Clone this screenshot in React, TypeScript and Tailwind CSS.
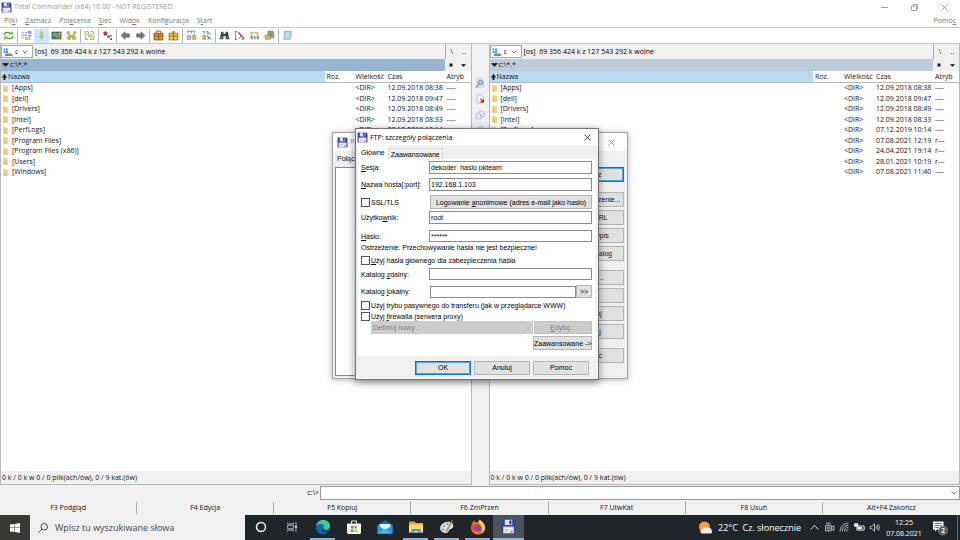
import React from "react";

type Entry = { name: string; date: string; attr: string };

const entries: Entry[] = [
  { name: "[Apps]", date: "12.09.2018 08:38", attr: "----" },
  { name: "[dell]", date: "12.09.2018 09:47", attr: "----" },
  { name: "[Drivers]", date: "12.09.2018 08:49", attr: "----" },
  { name: "[Intel]", date: "12.09.2018 08:33", attr: "----" },
  { name: "[PerfLogs]", date: "07.12.2019 10:14", attr: "----" },
  { name: "[Program Files]", date: "07.08.2021 12:19", attr: "r---" },
  { name: "[Program Files (x86)]", date: "24.04.2021 19:14", attr: "r---" },
  { name: "[Users]", date: "28.01.2021 10:19", attr: "r---" },
  { name: "[Windows]", date: "07.08.2021 11:40", attr: "----" },
];

function Floppy({ className = "size-[11px]" }: { className?: string }) {
  return (
    <svg viewBox="0 0 20 20" className={`shrink-0 ${className}`} aria-hidden="true">
      <path d="M1 1h16l2 2v16H1z" fill="#2b3fb4" />
      <path d="M5 1h10v7H5z" fill="#dfe6f8" />
      <path d="M11 2h3v5h-3z" fill="#2b3fb4" />
      <path d="M3 10h14v9H3z" fill="#f4f4f6" />
      <path d="M3 10h14v1H3z" fill="#c9504b" />
      <path d="M5 14h6M5 16.500h4" stroke="#9aa0b0" />
      <path d="M12 15h4v3h-4z" fill="#b9a0a8" />
    </svg>
  );
}

function Chevron({ className = "" }: { className?: string }) {
  return (
    <svg viewBox="0 0 6 4" className={`h-1 w-1.5 shrink-0 ${className}`} fill="none" stroke="currentColor" strokeWidth="0.8" aria-hidden="true">
      <path d="M.5.5 3 3 5.500.5" />
    </svg>
  );
}

function ToolIcon({ kind }: { kind: string }) {
  const drawings: Record<string, React.ReactNode> = {
    refresh: (
      <g fill="none" stroke="#3aa52e" strokeWidth="2.400">
        <path d="M2 9c1-5 7-6 11-3M18 11c-1 5-7 6-11 3" />
        <path d="M10 8h8V2zM10 12H2v6z" fill="#5cc13f" stroke="none" />
      </g>
    ),
    brief: (
      <g>
        <path d="M1 3h4v3H1zM1 8h4v3H1zM7 3h4v3H7zM7 8h4v3H7z" fill="#9aa6c8" />
        <path d="M13 2h6v5h-6zM13 9h6v3h-6z" fill="#8291d0" />
        <path d="M8 13h4v5H8zM14 13h3v5h-3zM1 13h4v2H1z" fill="#b7a73c" />
      </g>
    ),
    full: (
      <g>
        <path d="M8 2h4v4H8z" fill="#d8c04b" />
        <path d="M8 8h4v4H8zM8 14h4v3H8z" fill="#c5a93d" />
        <path d="M6 6h8v1H6zM6 12h8v1H6z" fill="#7e8ea8" />
      </g>
    ),
    thumbs: (
      <g>
        <path d="M1 3h18v14H1z" fill="#51605a" />
        <path d="M3 5h8v7H3z" fill="#49b0a1" />
        <path d="M9 8h8v7H9z" fill="#8a9b39" />
        <path d="M13 5h4v3h-4z" fill="#d8c04b" />
        <path d="M4 13h4v3H4z" fill="#3e7dae" />
      </g>
    ),
    tree: (
      <g fill="#e0bd3f" stroke="#927a30">
        <path d="M2 3h4v4H2zM14 3h4v4h-4zM3 12h5v5H3zM12 12h5v5h-5z" />
        <path d="M5 8l5 4 5-4" fill="none" strokeWidth="2" />
      </g>
    ),
    swap: (
      <g fill="none" stroke="#9da447" strokeWidth="1.600">
        <path d="M2 3h6v6H2zM12 11h6v6h-6z" />
        <path d="M12 3h5v5M8 17H3v-5M7 13l6-6" stroke="#77838f" />
      </g>
    ),
    star: (
      <g>
        <path d="M6 1l1.500 3L11 4 8.500 7l1.500 4-4-2-3 2 .5-4L1 4h3.500z" fill="#b32158" />
        <path d="M10 10h4v4h-4zM15 15h3v3h-3z" fill="#6f2a70" />
        <path d="M13 9h5v4z" fill="#d64d6b" />
      </g>
    ),
    back: <path d="M2 10l7-7v4h8v6H9v4z" fill="#777" stroke="#555" />,
    forward: <path d="M18 10l-7-7v4H3v6h8v4z" fill="#777" stroke="#555" />,
    pack: (
      <g>
        <path d="M2 6h16v12H2z" fill="#e39a2c" stroke="#7c4b17" strokeWidth="1.600" />
        <path d="M6 6V2h8v4M2 11h16M10 6v12" fill="none" stroke="#a9552c" strokeWidth="1.800" />
      </g>
    ),
    unpack: (
      <g>
        <path d="M2 6h16v12H2z" fill="#e5cf3c" stroke="#887328" strokeWidth="1.600" />
        <path d="M10 2v16M7 5l3-3 3 3M2 11h16" fill="none" stroke="#77802a" strokeWidth="1.800" />
      </g>
    ),
    ftp: (
      <g>
        <path d="M2 2h16M4 2v5M10 2v5M15 2v5" stroke="#8b8d9a" strokeWidth="2" strokeDasharray="3 1" />
        <path d="M2 10h7v7H2z" fill="#bdc4cf" stroke="#7d8188" />
        <path d="M12 9h6v8h-6z" fill="#d6c254" stroke="#948438" />
      </g>
    ),
    url: (
      <g>
        <path d="M2 3h4v4M9 3h3v4M14 3v4h4" fill="none" stroke="#6283a5" strokeWidth="1.600" />
        <path d="M3 10h6v7H3z" fill="#d6c254" stroke="#948438" />
        <path d="M11 10l7 7M12 17l3-3" stroke="#687f9c" strokeWidth="2" />
      </g>
    ),
    find: (
      <g fill="#3b3f46">
        <path d="M4 3h4v4h4V3h4l3 14h-7v-6H8v6H1z" />
        <path d="M3 12h3v3H3zM14 12h3v3h-3z" fill="#8a93a0" />
      </g>
    ),
    rename: (
      <g>
        <path d="M3 2v16M2 3h4M2 17h4" stroke="#6775ae" strokeWidth="1.600" />
        <path d="M8 4l10 12" stroke="#c04a41" strokeWidth="3" />
        <path d="M9 16l4-5M14 17h4" stroke="#555" strokeWidth="1.400" />
      </g>
    ),
    sync: (
      <g>
        <path d="M2 3h5v5H2zM12 3h5v5h-5z" fill="#d6c86a" />
        <path d="M3 11h4v6H3zM9 11h3v6H9zM14 11h4v6h-4z" fill="#8d9499" />
        <path d="M7 5h5M5 8v4M15 8v4" stroke="#667" />
      </g>
    ),
    copy: (
      <g>
        <path d="M7 2h9l2 3v9H7z" fill="#9aa36a" stroke="#777" />
        <path d="M2 9h10v8H2z" fill="#d5c056" stroke="#8a8140" />
        <path d="M9 5h6v7H9z" fill="#7f90a4" />
      </g>
    ),
    notepad: (
      <g>
        <path d="M5 2h12l-2 15H3z" fill="#a9d0e4" stroke="#78a3b8" />
        <path d="M7 6h7M6.500 9h7M6 12h7" stroke="#e8f5fa" />
        <path d="M15 17l2-14 1 1-1 14z" fill="#d8cc96" />
      </g>
    ),
  };
  return (
    <svg viewBox="0 0 20 20" className="size-[11px]" aria-hidden="true">
      {drawings[kind]}
    </svg>
  );
}

const toolGroups: string[][] = [
  ["refresh"],
  ["brief", "full", "thumbs", "tree"],
  ["swap"],
  ["star"],
  ["back", "forward"],
  ["pack", "unpack"],
  ["ftp", "url"],
  ["find", "rename", "sync", "copy"],
  ["notepad"],
];

function Toolbar() {
  return (
    <div className="flex h-[17px] shrink-0 items-center border-y border-[#c4c4c4] bg-white">
      {toolGroups.map((group, i) => (
        <div key={i} className={`flex items-center px-px ${i ? "border-l border-[#b4b4b4]" : ""}`}>
          {group.map((kind) => (
            <button
              key={kind}
              type="button"
              aria-label={kind}
              className={`flex h-[14px] w-[15px] items-center justify-center ${kind === "full" ? "bg-[#cde6fa]" : ""}`}
            >
              <ToolIcon kind={kind} />
            </button>
          ))}
        </div>
      ))}
    </div>
  );
}

function MenuItem({ before = "", hot, after = "" }: { before?: string; hot: string; after?: string }) {
  return (
    <button type="button" className="whitespace-nowrap">
      {before}
      <span className="underline">{hot}</span>
      {after}
    </button>
  );
}

function FilePane({ active = false }: { active?: boolean }) {
  return (
    <section className="flex min-w-0 flex-1 flex-col border-x border-[#b8b8b8]">
      <div className="flex h-[15px] shrink-0 items-center">
        <div className="relative flex h-[13px] w-8 shrink-0 items-center border border-[#a8a8a8] bg-white">
          <svg viewBox="0 0 20 16" className="ml-px h-2 w-[10px] shrink-0" aria-hidden="true">
            <path d="M1 1h4v4H1zM6 1h4v4H6zM1 6h4v4H1zM6 6h4v4H6z" fill="#28a8dc" />
            <path d="M4 11h12l3 2v3H4z" fill="#7d8790" />
          </svg>
          <select aria-label="Dysk" className="w-full appearance-none bg-transparent pl-0.5 outline-none">
            <option>c</option>
          </select>
          <Chevron className="absolute right-1 text-[#555]" />
        </div>
        <span className="ml-0.5 flex-1 whitespace-pre text-black">[os]  69 356 424 k z 127 543 292 k wolne</span>
        <div className="flex h-full w-[26px] items-center justify-around border-l border-[#aaa]">
          <button type="button">\</button>
          <button type="button">..</button>
        </div>
      </div>
      <div className="flex h-3 shrink-0">
        <div className={`flex flex-1 items-center gap-px ${active ? "bg-[#99b4d1]" : "bg-[#bfcddb]"}`}>
          <svg viewBox="0 0 8 4" className="ml-px h-1 w-[7px]" aria-hidden="true">
            <path d="M0 0h8L4 4z" />
          </svg>
          <span>c:\*.*</span>
        </div>
        <div className="flex w-[26px] items-center justify-around">
          <button type="button" aria-label="Ulubione">
            <svg viewBox="0 0 6 6" className="size-1" aria-hidden="true">
              <path d="M3 0v6M0 3h6M1 1l4 4M5 1L1 5" stroke="black" strokeWidth="1.200" />
            </svg>
          </button>
          <button type="button" aria-label="Historia">
            <svg viewBox="0 0 6 3" className="h-[3px] w-[5px]" aria-hidden="true">
              <path d="M0 0h6L3 3z" />
            </svg>
          </button>
        </div>
      </div>
      <div className="min-h-0 flex-1 overflow-hidden bg-white">
        <table className="w-full table-fixed border-separate border-spacing-0 text-left leading-[10px] whitespace-nowrap">
          <colgroup>
            <col />
            <col className="w-[31px]" />
            <col className="w-8" />
            <col className="w-[59px]" />
            <col className="w-6" />
          </colgroup>
          <thead>
            <tr className="h-3 [&>th]:border-b [&>th]:border-[#b5b5b5] [&>th]:p-0 [&>th]:font-normal">
              <th className="bg-[#badaf2]">
                <span className="flex items-center gap-px">
                  <svg viewBox="0 0 6 7" className="ml-px h-[6px] w-[5px]" aria-hidden="true">
                    <path d="M3 0l3 4H4v3H2V4H0z" />
                  </svg>
                  Nazwa
                </span>
              </th>
              <th><span className="pl-0.5">Roz.</span></th>
              <th>Wielkość</th>
              <th>Czas</th>
              <th>Atryb</th>
            </tr>
          </thead>
          <tbody>
            {entries.map((e) => (
              <tr key={e.name} className="odd:h-[10px] even:h-[11px] [&>td]:p-0">
                <td>
                  <span className="flex items-center gap-1 pl-0.5">
                    <svg viewBox="0 0 10 14" className="h-[7px] w-[5px]" aria-hidden="true">
                      <path d="M0 0h6l1 2h3v12H0z" fill="#f0d58a" />
                      <path d="M4 2l2 5v6H2z" fill="#e6b944" opacity=".6" />
                    </svg>
                    {e.name}
                  </span>
                </td>
                <td />
                <td>&lt;DIR&gt;</td>
                <td>{e.date}</td>
                <td>{e.attr}</td>
              </tr>
            ))}
          </tbody>
        </table>
      </div>
      <div className="flex h-[14px] shrink-0 items-center border-b border-[#b8b8b8] pl-px">
        0 k / 0 k w 0 / 0 plik(ach/ów), 0 / 9 kat.(ów)
      </div>
    </section>
  );
}

function SideBar() {
  return (
    <div className="flex w-[17px] shrink-0 flex-col items-center gap-1.5 pt-[34px]">
      {["Podgląd", "Edycja", "Kopiuj", "Przenieś"].map((label, i) => (
        <button key={label} type="button" aria-label={label}>
          <svg viewBox="0 0 20 20" className="size-[10px]" fill="none" aria-hidden="true">
            {i < 2 && <path d="M4 2h9l4 4v12H4z" fill="#edf1fb" stroke="#98a6cf" />}
            {i === 0 && (
              <g>
                <circle cx="11" cy="9" r="4.500" fill="#b8cae8" stroke="#597197" strokeWidth="1.500" />
                <path d="M8 12l-6 7" stroke="#8593b4" strokeWidth="2.500" />
              </g>
            )}
            {i === 1 && <path d="M11 9l5 6M12 16h5v-4z" stroke="#b92820" strokeWidth="2.200" fill="#bd332a" />}
            {i > 1 && <path d="M2 7h7l3 3v8H2zM9 2h6l3 3v9h-6v-4L9 7z" fill="#e5ecfb" stroke="#7b93d0" />}
          </svg>
        </button>
      ))}
    </div>
  );
}

const winButton = "border border-[#b4b4b4] bg-[#e1e1e1] text-center whitespace-nowrap";
const field = "border border-[#8a8a8a] bg-white px-px outline-none";

function ConnectDialog() {
  const buttons: { label: string; gap: string }[] = [
    { label: "Połącz", gap: "" },
    { label: "Nowe połączenie...", gap: "mt-[10px]" },
    { label: "Nowy URL", gap: "mt-[3px]" },
    { label: "Kopiuj wpis", gap: "mt-[3px]" },
    { label: "Nowy katalog", gap: "mt-[3px]" },
    { label: "Zmień...", gap: "mt-[9px]" },
    { label: "Usuń", gap: "mt-[3px]" },
    { label: "Szyfruj", gap: "mt-[3px]" },
    { label: "Anuluj", gap: "mt-[3px]" },
    { label: "Pomoc", gap: "mt-[9px]" },
  ];
  return (
    <div className="absolute top-[132px] left-[332px] flex h-[247px] w-[296px] flex-col border border-[#a5a5a5] bg-[#f0f0f0] font-['Liberation_Sans',sans-serif] text-[7px] shadow-[0_1px_6px_rgba(0,0,0,0.3)]">
      <div className="flex h-[18px] shrink-0 items-center bg-white px-1 text-[#888]">
        <Floppy />
        <span className="ml-0.5 flex-1 font-['Open_Sans',sans-serif]">Połącz</span>
        <button type="button" aria-label="Zamknij okno" className="mr-2">
          <svg viewBox="0 0 7 7" className="size-[7px]" stroke="#888" strokeWidth=".8" aria-hidden="true">
            <path d="M.5.5l6 6M6.500.5l-6 6" />
          </svg>
        </button>
      </div>
      <div className="flex h-4 shrink-0 items-center pl-1">Połącz z:</div>
      <div className="flex min-h-0 flex-1 gap-2 pr-[3px] pb-0.5 pl-0.5">
        <div className="flex-1 border border-[#8a8a8a] bg-white" />
        <div className="flex w-[66px] flex-col">
          {buttons.map(({ label, gap }, i) => (
            <button
              key={label}
              type="button"
              className={`h-[15px] shrink-0 border whitespace-nowrap ${gap} ${i === 0 ? "border-[#0078d7] ring-1 ring-[#0078d7]/60 ring-inset" : "border-[#b4b4b4]"} bg-[#e1e1e1]`}
            >
              {label}
            </button>
          ))}
        </div>
      </div>
    </div>
  );
}

function CheckRow({ id, className = "", children }: { id: string; className?: string; children: React.ReactNode }) {
  return (
    <div className={`flex h-[9px] items-center ${className}`}>
      <input id={id} type="checkbox" className="size-[9px] shrink-0 appearance-none border border-[#555] bg-white" />
      <label htmlFor={id} className="ml-px whitespace-nowrap">{children}</label>
    </div>
  );
}

function FtpDialog() {
  return (
    <div className="absolute top-[128px] left-[355px] flex h-[252px] w-[244px] flex-col border border-[#777] bg-[#f0f0f0] font-['Liberation_Sans',sans-serif] text-[7px] leading-[9px] text-black shadow-[0_2px_8px_rgba(0,0,0,0.45)]">
      <div className="flex h-4 shrink-0 items-center bg-white pl-px">
        <Floppy />
        <span className="ml-0.5 flex-1 font-['Open_Sans',sans-serif]">FTP: szczegóły połączenia</span>
        <button type="button" aria-label="Zamknij" className="mr-[7px]">
          <svg viewBox="0 0 7 7" className="size-[7px]" stroke="#222" strokeWidth=".8" aria-hidden="true">
            <path d="M.5.5l6 6M6.500.5l-6 6" />
          </svg>
        </button>
      </div>
      <div className="flex h-[14px] shrink-0 items-end pl-0.5" role="tablist">
        <button type="button" role="tab" aria-selected="true" className="h-[13px] bg-white px-[3px]">Główne</button>
        <button type="button" role="tab" aria-selected="false" className="h-[11px] border border-b-0 border-[#d9d9d9] px-0.5">Zaawansowane</button>
      </div>
      <form className="mx-0.5 flex flex-1 flex-col bg-white pt-0.5 pr-1 pl-[3px]" onSubmit={(e) => e.preventDefault()}>
        <div className="flex h-[13px] items-center">
          <label htmlFor="session" className="w-[68px] shrink-0"><u>S</u>esja:</label>
          <input id="session" defaultValue="dekoder  haslo pkteam" className="h-full min-w-0 flex-1 border border-[#5b9cc4] bg-white px-px outline-none" />
        </div>
        <div className="mt-1 flex h-[13px] items-center">
          <label htmlFor="host" className="w-[68px] shrink-0"><u>N</u>azwa hosta[:port]:</label>
          <input id="host" defaultValue="192.168.1.103" className={`h-full min-w-0 flex-1 ${field}`} />
        </div>
        <div className="mt-1 flex h-[14px] items-center">
          <CheckRow id="ssl" className="w-[68px]">SSL/TLS</CheckRow>
          <button type="button" className={`ml-px h-full flex-1 ${winButton}`}>
            Logowanie <u>a</u>nonimowe (adres e-mail jako hasło)
          </button>
        </div>
        <div className="mt-0.5 flex h-[13px] items-center">
          <label htmlFor="user" className="w-[68px] shrink-0">Użytko<u>w</u>nik:</label>
          <input id="user" defaultValue="root" className={`h-full min-w-0 flex-1 ${field}`} />
        </div>
        <div className="mt-1.5 flex h-3 items-center">
          <label htmlFor="pass" className="w-[68px] shrink-0"><u>H</u>asło:</label>
          <input id="pass" defaultValue="******" className={`h-full min-w-0 flex-1 ${field}`} />
        </div>
        <p className="mt-px whitespace-nowrap">Ostrzeżenie: Przechowywanie hasła nie jest bezpieczne!</p>
        <CheckRow id="master" className="mt-1"><u>U</u>żyj hasła głównego dla zabezpieczenia hasła</CheckRow>
        <div className="mt-[3px] flex h-3 items-center">
          <label htmlFor="remote" className="w-[68px] shrink-0">Katalog <u>z</u>dalny:</label>
          <input id="remote" className={`h-full min-w-0 flex-1 ${field}`} />
        </div>
        <div className="mt-[5px] flex h-[13px] items-center">
          <label htmlFor="local" className="w-[69px] shrink-0">Katalog <u>l</u>okalny:</label>
          <input id="local" className={`h-3 min-w-0 flex-1 ${field}`} />
          <button type="button" className={`h-full w-4 ${winButton}`}>&gt;&gt;</button>
        </div>
        <CheckRow id="passive" className="mt-[3px]">Użyj trybu pasywnego do transferu (jak w przeglądarce WWW)</CheckRow>
        <CheckRow id="firewall" className="mt-0.5">Użyj <u>f</u>irewalla (serwera proxy)</CheckRow>
        <div className="ml-[10px] flex h-[13px] gap-px">
          <div className="relative flex flex-1 items-center bg-[#cccccc] text-[#838383]">
            <select aria-label="Serwer proxy" disabled className="h-full w-full appearance-none bg-transparent pl-0.5 opacity-100">
              <option>Definiuj nowy...</option>
            </select>
            <Chevron className="absolute right-0.5 text-[#aaa]" />
          </div>
          <button type="button" disabled className="w-[58px] border border-[#bfbfbf] bg-[#cccccc] text-[#838383]">
            <u>E</u>dytuj...
          </button>
        </div>
        <button type="button" className={`mt-0.5 h-[14px] w-[59px] self-end ${winButton}`}>Zaawansowane -&gt;</button>
      </form>
      <div className="flex h-[23px] shrink-0 items-center justify-end gap-[3px] pr-[9px]">
        <button type="button" className="h-[14px] w-14 border border-[#0078d7] bg-[#e1e1e1] ring-1 ring-[#0078d7]/60 ring-inset">OK</button>
        <button type="button" className={`h-[14px] w-14 ${winButton}`}>Anuluj</button>
        <button type="button" className={`h-[14px] w-14 ${winButton}`}>Pomoc</button>
      </div>
    </div>
  );
}

function AppIcon({ kind }: { kind: string }) {
  const art: Record<string, React.ReactNode> = {
    cortana: <circle cx="16" cy="16" r="9" fill="none" stroke="#f2f2f2" strokeWidth="3" />,
    tasks: (
      <g fill="none" stroke="#d5d8da" strokeWidth="1.800">
        <path d="M6 6v3h13V6M6 26v-3h13v3M6 12h13v8H6zM25 5v8M25 18v9" />
        <path d="M23 14h4v3h-4z" fill="#d5d8da" />
      </g>
    ),
    edge: (
      <g>
        <circle cx="16" cy="16" r="14" fill="#1583d3" />
        <path d="M2 14C4 5 11 2 17 2c9 0 14 7 13 13-1 4-5 6-10 5-3-1-1-3-2-6-2-5-11-6-16 0z" fill="#44ca8a" />
        <path d="M2 16c4-8 13-7 15-2-4-1-6 2-5 6 1 5 7 8 14 5-3 4-7 5-11 5C7 30 2 24 2 16z" fill="#0b62b8" />
        <path d="M14 16c0 7 9 9 15 6l-2 3c-7 4-16-1-13-9z" fill="#202a32" />
      </g>
    ),
    store: (
      <g>
        <path d="M2 9h28v19l-2 2H4l-2-2z" fill="#f3f3f1" />
        <path d="M11 9V4h10v5" fill="none" stroke="#f3f3f1" strokeWidth="2" />
        <path d="M10 14h5v5h-5z" fill="#e65b36" />
        <path d="M17 14h5v5h-5z" fill="#78af3b" />
        <path d="M10 21h5v5h-5z" fill="#2a93cf" />
        <path d="M17 21h5v5h-5z" fill="#eeb62d" />
      </g>
    ),
    mail: (
      <g>
        <path d="M1 12L16 2l15 10v17H1z" fill="#1369ad" />
        <path d="M5 10h22v10H5z" fill="#e9f4fb" />
        <path d="M1 12l15 10 15-10v17H1z" fill="#259cdd" />
        <path d="M1 29l15-10 15 10z" fill="#46baf0" />
      </g>
    ),
    explorer: (
      <g>
        <path d="M2 5h11l3 3h14v19H2z" fill="#dca534" />
        <path d="M2 11h28v16H2z" fill="#ffd968" />
        <path d="M7 20h18v8h-5v-4h-8v4H7z" fill="#4498d2" />
      </g>
    ),
    paint: (
      <g>
        <path d="M3 22C-1 13 11 3 22 6c9 2 8 13 2 14-4 1-4 2-5 5-2 5-13 4-16-3z" fill="#d8dde0" />
        <circle cx="10" cy="14" r="2" fill="#d28b45" />
        <circle cx="17" cy="10" r="2" fill="#5ca565" />
        <circle cx="8" cy="21" r="2" fill="#579fc9" />
        <path d="M27 2L14 26" stroke="#9c7956" strokeWidth="2.500" />
      </g>
    ),
    firefox: (
      <g>
        <path d="M4 10C5 7 7 5 8 3l3 4 5-1 3-5c6 4 11 10 11 16 0 8-6 14-14 14S2 25 2 18c0-3 1-6 2-8z" fill="#f67526" />
        <path d="M19 1c6 4 11 10 11 16 0 5-3 10-7 12 3-6 2-12-2-16-3-3-4-7-2-12z" fill="#ffd23e" />
        <circle cx="16" cy="18" r="7" fill="#8044b7" />
        <path d="M3 14c4-4 8-5 12-2l-4 3c-3 4 1 8 6 7-6 6-14 1-14-8z" fill="#ee3e4d" />
      </g>
    ),
  };
  if (kind === "totalcmd") return <Floppy className="size-[15px]" />;
  return (
    <svg viewBox="0 0 32 32" className={kind === "tasks" ? "size-[14px]" : "size-4"} aria-hidden="true">
      {art[kind]}
    </svg>
  );
}

const apps = ["cortana", "tasks", "edge", "store", "mail", "explorer", "paint", "firefox", "totalcmd"];
const running = ["edge", "explorer", "paint", "firefox", "totalcmd"];

function Taskbar() {
  return (
    <footer className="flex h-[25px] shrink-0 items-stretch bg-[#1f2529] text-[9px] text-white">
      <button type="button" aria-label="Start" className="flex w-[30px] items-center justify-center bg-[#3a3935]">
        <svg viewBox="0 0 20 20" className="size-[10px]" fill="white" aria-hidden="true">
          <path d="M0 3l9-1v7H0zM10 2l10-2v9H10zM0 10h9v8l-9-1zM10 10h10v10l-10-2z" />
        </svg>
      </button>
      <label className="flex w-[215px] items-center gap-[7px] bg-[#f0f0f0] pl-2 text-[#444]">
        <svg viewBox="0 0 20 20" className="size-[10px]" fill="none" stroke="#333" strokeWidth="1.800" aria-hidden="true">
          <circle cx="12.500" cy="7.500" r="6.500" />
          <path d="M8 12l-7 7" />
        </svg>
        <input aria-label="Szukaj" placeholder="Wpisz tu wyszukiwane słowa" className="min-w-0 flex-1 bg-transparent outline-none placeholder:text-[#444]" />
      </label>
      <nav className="flex">
        {apps.map((app) => (
          <button key={app} type="button" aria-label={app} className={`flex w-[31px] flex-col items-center ${app === "totalcmd" ? "bg-[#4c5358]" : ""}`}>
            <span className="flex flex-1 items-center"><AppIcon kind={app} /></span>
            <span className={`h-[2px] ${app === "totalcmd" ? "w-full" : "w-[25px]"} ${running.includes(app) ? "bg-[#76b9ed]" : ""}`} />
          </button>
        ))}
      </nav>
      <div className="ml-auto flex items-center">
        <svg viewBox="0 0 28 26" className="h-[13px] w-[14px]" aria-hidden="true">
          <circle cx="13" cy="12" r="11" fill="#f3a13c" />
          <path d="M8 25c-5-2-4-8 1-8 1-6 9-6 11-2 4-2 7 0 7 3 2 3 1 7-2 7z" fill="#e5edf3" />
        </svg>
        <span className="ml-1.5 whitespace-pre">22°C  Cz. słonecznie</span>
        <div className="ml-2 flex items-center gap-1">
          <svg viewBox="0 0 20 20" className="size-[11px]" fill="none" stroke="#eee" strokeWidth="1.600" aria-hidden="true">
            <path d="M3 14l7-8 7 8" />
          </svg>
          <svg viewBox="0 0 20 20" className="size-[11px]" fill="none" stroke="#eee" strokeWidth="1.400" aria-hidden="true">
            <path d="M3 6h10v10H3zM13 9l5-2v8l-5-2M4 2h8" />
            <circle cx="8" cy="11" r="2" />
          </svg>
          <svg viewBox="0 0 20 20" className="size-[11px]" fill="none" stroke="#ddd" strokeWidth="1.500" aria-hidden="true">
            <path d="M2 17C2 9 9 2 17 2M6 17C6 11 11 6 17 6M10 17c0-4 3-7 7-7M14 17c0-2 1-3 3-3" />
          </svg>
          <svg viewBox="0 0 20 20" className="size-[11px]" fill="none" stroke="#eee" strokeWidth="1.400" aria-hidden="true">
            <path d="M5 7h13v8H5zM18 9h2v4h-2" />
            <path d="M7 9h7v4H7zM1 3h6v5H1z" fill="#eee" />
          </svg>
          <svg viewBox="0 0 20 20" className="size-[11px]" fill="none" stroke="#eee" strokeWidth="1.300" aria-hidden="true">
            <path d="M2 8h3l5-5v14l-5-5H2zM12 8q2 2 0 4M14.500 6q3 4 0 8M17 4q4 6 0 12" />
          </svg>
        </div>
        <time className="ml-1.5 flex w-[36px] flex-col items-center text-[7px] leading-[11px]">
          <span>12:25</span>
          <span>07.08.2021</span>
        </time>
        <button type="button" aria-label="Powiadomienia" className="ml-[10px] flex items-center">
          <svg viewBox="0 0 32 32" className="size-4" aria-hidden="true">
            <path d="M2 3h21v16H10l-4 4v-4H2z" fill="white" />
            <path d="M5 7h15M5 11h15M5 15h9" stroke="#555" strokeWidth="1.500" />
            <circle cx="22" cy="21" r="9" fill="#555b60" stroke="#bbb" />
            <text x="22" y="26" textAnchor="middle" fontSize="13" fontWeight="700" fill="white">2</text>
          </svg>
        </button>
        <span className="mr-0.5 ml-[9px] h-[25px] w-px bg-[#666]" />
      </div>
    </footer>
  );
}

const functionKeys = ["F3 Podgląd", "F4 Edycja", "F5 Kopiuj", "F6 ZmPrzen", "F7 UtwKat", "F8 Usuń", "Alt+F4 Zakończ"];

export default function App() {
  return (
    <div className="relative flex h-screen flex-col overflow-hidden bg-[#f0f0f0] font-['Open_Sans','Noto_Sans',sans-serif] text-[7px] leading-[10px] text-[#111]">
      <header className="shrink-0 bg-white text-[#777]">
        <div className="flex h-[14px] items-center pl-px">
          <Floppy />
          <span className="ml-0.5 flex-1 text-[#999]">Total Commander (x64) 10.00 - NOT REGISTERED</span>
          <div className="flex items-center gap-[23px] pr-3">
            {["M0 3.500h7", "M.5 2h5v4.500h-5zM2 2V.5h4.500v4.500H5.500", "M.5.5l6 6M6.500.5l-6 6"].map((d, i) => (
              <button key={d} type="button" aria-label={["Minimalizuj", "Przywróć", "Zamknij program"][i]}>
                <svg viewBox="0 0 7 7" className="size-[7px]" fill="none" stroke="#888" strokeWidth=".8" aria-hidden="true">
                  <path d={d} />
                </svg>
              </button>
            ))}
          </div>
        </div>
        <nav className="flex h-[13px] items-center gap-2 pr-1 pl-1">
          <MenuItem before="Pli" hot="k" after="i" />
          <MenuItem hot="Z" after="aznacz" />
          <MenuItem before="Pol" hot="e" after="cenia" />
          <MenuItem hot="S" after="ieć" />
          <MenuItem before="Wid" hot="o" after="k" />
          <MenuItem before="Konf" hot="i" after="guracja" />
          <MenuItem before="S" hot="t" after="art" />
          <span className="ml-auto"><MenuItem before="Pomo" hot="c" /></span>
        </nav>
      </header>
      <Toolbar />
      <main className="flex min-h-0 flex-1">
        <FilePane active />
        <SideBar />
        <FilePane />
      </main>
      <div className="mt-px flex h-[14px] shrink-0 items-center">
        <label htmlFor="command" className="w-1/3 pr-px text-right">c:\&gt;</label>
        <div className="flex h-full flex-1 items-center border border-[#999] bg-white pr-0.5">
          <input id="command" className="min-w-0 flex-1 bg-transparent px-0.5 outline-none" />
          <button type="button" aria-label="Historia poleceń"><Chevron className="text-[#555]" /></button>
        </div>
      </div>
      <div className="grid h-[15px] shrink-0 grid-cols-7 items-end">
        {functionKeys.map((key) => (
          <button key={key} type="button" className="mb-px h-3 border-r border-[#aaa] last:border-r-0">{key}</button>
        ))}
      </div>
      <Taskbar />
      <ConnectDialog />
      <FtpDialog />
    </div>
  );
}
